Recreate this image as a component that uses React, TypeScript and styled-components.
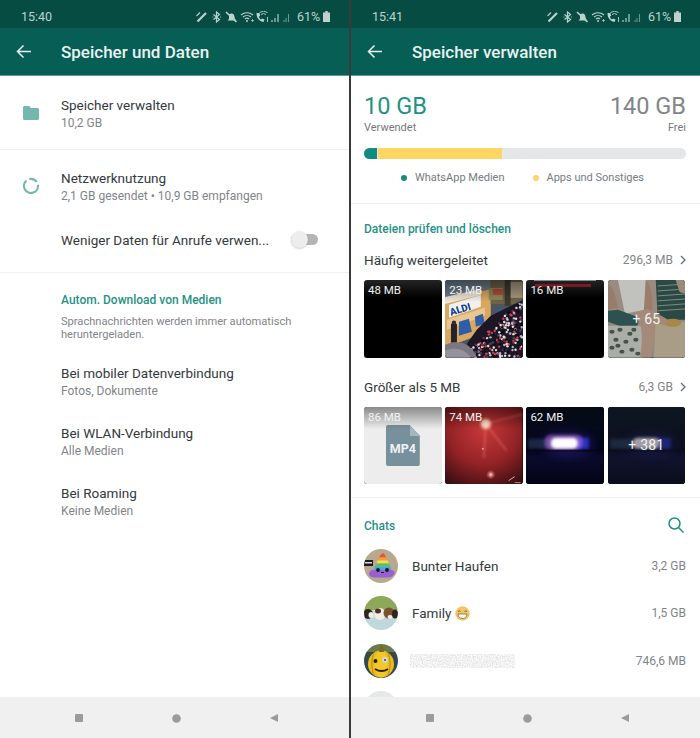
import React from "react";
import styled, { createGlobalStyle } from "styled-components";

const Global = createGlobalStyle`
  html, body { margin: 0; padding: 0; background: #fff; }
  body { font-family: Roboto, "Liberation Sans", sans-serif; width: 700px; height: 738px; overflow: hidden; }
  * { box-sizing: border-box; }
`;

const Page = styled.div`
  display: flex;
  width: 700px;
  height: 738px;
  background: #3a3a3a;
  gap: 2px;
`;
const Phone = styled.div`
  width: 349px;
  height: 738px;
  display: flex;
  flex-direction: column;
  background: #fff;
  overflow: hidden;
`;
const StatusBar = styled.div`
  height: 28px;
  flex: none;
  background: #064c43;
  display: flex;
  align-items: center;
  justify-content: space-between;
  padding: 5px 19px 0 21px;
  color: #bcd3ce;
  font-size: 12.5px;
`;
const StatusIcons = styled.div`
  display: flex;
  align-items: center;
  gap: 5px;
  letter-spacing: -0.05px;
`;
const Toolbar = styled.div`
  height: 48px;
  flex: none;
  background: #075e54;
  display: flex;
  align-items: center;
  border-bottom: 1px solid #5e9a92;
`;
const BackButton = styled.div`
  width: 61px;
  padding-left: 16px;
  display: flex;
  align-items: center;
`;
const ToolbarTitle = styled.div`
  font-size: 17px;
  font-weight: 500;
  color: #e9f3f1;
`;
const Body = styled.div`
  flex: 1;
  min-height: 0;
  overflow: hidden;
`;
const NavBar = styled.div`
  height: 41px;
  flex: none;
  background: #f0f0f0;
  display: flex;
  align-items: center;
  justify-content: space-between;
  padding: 1px 71px 0 75px;
`;
const Divider = styled.div`
  height: 1px;
  background: #efefef;
`;
const SettingRow = styled.div<{ $h: number; $pb?: number }>`
  display: flex;
  height: ${p => p.$h}px;
  padding-bottom: ${p => p.$pb ?? 0}px;
  align-items: center;
`;
const IconSlot = styled.div`
  width: 61px;
  flex: none;
  display: flex;
  justify-content: center;
`;
const RowText = styled.div`
  flex: 1;
  min-width: 0;
  padding-top: 2px;
`;
const Title = styled.div`
  font-size: 13.5px;
  line-height: 18px;
  color: #33393c;
`;
const Sub = styled.div`
  font-size: 12px;
  line-height: 17px;
  margin-top: 1px;
  color: #7f8589;
`;
const SectionHead = styled.div`
  font-size: 12px;
  font-weight: 500;
  line-height: 16px;
  color: #1f9284;
`;
const Switch = styled.div`
  position: relative;
  width: 27px;
  height: 11px;
  border-radius: 6px;
  background: #b4b4b4;
  margin-right: 31px;
`;
const Knob = styled.span`
  position: absolute;
  left: 0;
  top: -3px;
  width: 17px;
  height: 17px;
  border-radius: 50%;
  background: #ededed;
  box-shadow: 0 1px 2px rgba(0,0,0,.18);
`;
const MediaBlock = styled.div`
  padding: 19px 0 0 61px;
  height: 78px;
`;
const Note = styled.div`
  margin-top: 7px;
  font-size: 11.1px;
  line-height: 13px;
  color: #7f8589;
  padding-right: 40px;
`;

const Usage = styled.div`
  padding: 16px 14px 0 13px;
  height: 127px;
`;
const UsageNums = styled.div`
  display: flex;
  justify-content: space-between;
`;
const UsageCol = styled.div<{ $right?: boolean }>`
  display: flex;
  flex-direction: column;
  align-items: ${p => (p.$right ? "flex-end" : "flex-start")};
`;
const Big = styled.div<{ $c: string }>`
  font-size: 23.5px;
  line-height: 28px;
  color: ${p => p.$c};
`;
const Small = styled.div`
  font-size: 11px;
  line-height: 13px;
  margin-top: 1px;
  color: #73797d;
`;
const Bar = styled.div`
  display: flex;
  margin-top: 14px;
  height: 10.5px;
  border-radius: 6px;
  overflow: hidden;
  background: #e4e6e8;
`;
const BarPart = styled.div<{ $c: string; $w: number }>`
  width: ${p => p.$w}px;
  background: ${p => p.$c};
  margin-right: 1px;
`;
const Legend = styled.div`
  display: flex;
  justify-content: center;
  gap: 28px;
  margin-top: 11px;
  padding-right: 5px;
`;
const LegendItem = styled.div`
  display: flex;
  align-items: center;
  gap: 8px;
  font-size: 11px;
  line-height: 16px;
  color: #767c80;
`;
const Dot = styled.span<{ $c: string }>`
  width: 6px;
  height: 6px;
  border-radius: 50%;
  background: ${p => p.$c};
`;
const Files = styled.div`
  padding: 17px 14px 0 13px;
  height: 293px;
`;
const FileRow = styled.div<{ $mt?: number }>`
  display: flex;
  align-items: center;
  justify-content: space-between;
  height: 18px;
  margin: ${p => p.$mt ?? 0}px 0 11px;
`;
const FileTitle = styled.div`
  font-size: 13.5px;
  color: #33393c;
`;
const FileSize = styled.div`
  display: flex;
  align-items: center;
  gap: 7px;
  font-size: 12px;
  color: #7f8589;
`;
const Thumbs = styled.div`
  display: grid;
  grid-template-columns: repeat(4, 77.6px);
  column-gap: 3.6px;
  margin: 0 0 20px;
`;
const Thumb = styled.div<{ $black?: boolean }>`
  position: relative;
  height: 77.6px;
  border-radius: 3px;
  overflow: hidden;
  background: ${p => (p.$black ? "linear-gradient(#242424, #000 18px)" : "#000")};
  svg { display: block; width: 100%; height: 100%; filter: blur(0.35px); }
`;
const Shade = styled.div`
  position: absolute;
  left: 0;
  right: 0;
  top: 0;
  height: 22px;
  background: linear-gradient(rgba(0,0,0,.42), rgba(0,0,0,0));
`;
const ThumbSize = styled.div`
  position: absolute;
  left: 4px;
  top: 3px;
  font-size: 11.5px;
  line-height: 14px;
  color: #f2f2f2;
`;
const Dim = styled.div`
  position: absolute;
  inset: 0;
  display: flex;
  align-items: center;
  justify-content: center;
  background: rgba(40, 50, 50, .22);
  font-size: 14px;
  color: #f2f4f4;
  letter-spacing: 0.2px;
`;
const Banner = styled.div`
  position: absolute;
  left: 8px;
  top: 0;
  width: 62px;
  height: 1px;
  background: #8a8a8a;
`;
const BannerRed = styled.div`
  position: absolute;
  left: 9px;
  top: 4px;
  width: 56px;
  height: 3px;
  background: #7a1a24;
`;
const ChatsHead = styled.div`
  display: flex;
  justify-content: space-between;
  align-items: center;
  height: 20px;
  padding: 0 16px 0 13px;
  margin-top: 18px;
`;
const SearchIcon = styled.svg`
  margin-top: -2px;
`;
const ChatList = styled.div`
  padding: 4px 14px 0 13px;
  margin-top: 2px;
`;
const ChatRow = styled.div`
  display: flex;
  align-items: center;
  height: 47.5px;
`;
const Avatar = styled.div<{ $ghost?: boolean }>`
  width: 34px;
  height: 34px;
  border-radius: 50%;
  overflow: hidden;
  flex: none;
  margin-right: 14px;
  background: ${p => (p.$ghost ? "#e4e8e8" : "transparent")};
  svg { display: block; width: 100%; height: 100%; filter: blur(0.25px); }
`;
const ChatName = styled.div`
  flex: 1;
  display: flex;
  align-items: center;
  gap: 4px;
  font-size: 13.5px;
  color: #33393c;
`;
const ChatSize = styled.div`
  font-size: 12px;
  color: #7f8589;
`;
const BlurredSvg = styled.svg`
  display: block;
  margin-left: -2px;
  filter: blur(0.4px);
`;
const Mp4Card = styled.div`
  position: absolute;
  inset: 0;
  background: #ededed;
  display: flex;
  align-items: center;
  justify-content: center;
`;
const Mp4Icon = styled.div`
  position: relative;
  width: 34px;
  height: 41px;
  background: #78909c;
  border-radius: 2px;
  clip-path: polygon(0 0, 70% 0, 100% 26%, 100% 100%, 0 100%);
  display: flex;
  align-items: center;
  justify-content: center;
  color: #eef2f4;
  font-size: 12.5px;
  font-weight: 700;
  padding-top: 7px;
  &::after {
    content: "";
    position: absolute;
    right: 0;
    top: 0;
    width: 10px;
    height: 11px;
    background: linear-gradient(to top right, #a4b6c0 50%, transparent 50%);
  }
`;

const Back = () => (
  <svg width="15" height="15" viewBox="0 0 15 15" fill="none" stroke="#eaf3f1" strokeWidth="1.5">
    <path d="M15 7.500H1.500M7.500 1.500l-6 6 6 6" />
  </svg>
);
const Chevron = () => (
  <svg width="6" height="10" viewBox="0 0 6 10" fill="none" stroke="#666c70" strokeWidth="1.3">
    <path d="M1 1l4 4-4 4" />
  </svg>
);
const Status = ({ time }: { time: string }) => (
  <StatusBar>
    <span>{time}</span>
    <StatusIcons>
      <svg width="96" height="12" viewBox="0 0 96 12" fill="none" stroke="#bcd3ce" strokeWidth="1.1">
        <path d="M1.500 10.500 10 2" strokeWidth="2.200" />
        <path d="M.5 5 4 1.500" />
        <path d="M17.500 3.500l6 5-3 2.500V1l3 2.500-6 5" strokeWidth="1.200" />
        <path d="M16.500 6h.8M24 6h.8" />
        <path d="M33 3.500c2-1.500 4-1 5 .5l1 4 1.500 1.500h-9L33 8z" fill="#bcd3ce" stroke="none" />
        <path d="M30 1l10.500 10" strokeWidth="1.600" />
        <path d="M45 4a9 9 0 0 1 12 0M47 6a6 6 0 0 1 8 0M49 8a3 3 0 0 1 4 0" />
        <circle cx="51" cy="10" r="1" fill="#bcd3ce" stroke="none" />
        <path d="M55 9.500h3M56.500 8v3" strokeWidth=".7" />
        <path d="M60.500 2c0 5 2.500 8 7 9l1-2.500-2.500-1-1 1c-1.200-.7-1.800-1.700-2-3l1.200-.8-.8-2.700z" fill="#bcd3ce" stroke="none" />
        <path d="M65 3.500a4 4 0 0 1 5 0M63.500 1.500a7 7 0 0 1 8 0" strokeWidth=".9" />
        <path d="M71.500 6v5" strokeWidth=".9" />
        <path d="M76 11V9M79 11V7M82 11V3" />
        <path d="M88 11V9M90 11V7M92.500 11V3" opacity=".55" />
      </svg>
      <span>61%</span>
      <svg width="7" height="11" viewBox="0 0 7 11" fill="#bcd3ce" style={{ marginLeft: -2 }}>
        <path d="M2.300 0h2.400v1.500H7V11H0V1.500h2.300z" />
      </svg>
    </StatusIcons>
  </StatusBar>
);
const Nav = () => (
  <NavBar>
    <svg width="8" height="8" viewBox="0 0 8 8"><rect width="8" height="8" rx="1" fill="#9b9b9b" /></svg>
    <svg width="9" height="9" viewBox="0 0 9 9"><circle cx="4.500" cy="4.500" r="4.300" fill="#9b9b9b" /></svg>
    <svg width="8" height="8" viewBox="0 0 8 8"><path d="M8 0v8L0 4z" fill="#9b9b9b" /></svg>
  </NavBar>
);

function scatter(n: number, seed: number) {
  const pts: { x: number; y: number; c: string }[] = [];
  const cols = ["#c9454c", "#e6dcd8", "#7a2a3c", "#b8b4c4", "#e9e4e0", "#3a4668", "#0c0a14", "#0c0a14"];
  let s = seed;
  const rnd = () => {
    s = (s * 9301 + 49297) % 233280;
    return s / 233280;
  };
  while (pts.length < n) {
    const x = rnd() * 78;
    const y = 18 + rnd() * 60;
    if (y > 74 - (x - 22) * 1.05 && y > 20 + (78 - x) * 0.85) {
      pts.push({ x, y, c: cols[Math.floor(rnd() * cols.length)] });
    }
  }
  return pts;
}
const crowdDots = scatter(230, 7);

const Crowd = () => (
  <svg viewBox="0 0 78 78" preserveAspectRatio="none">
    <rect width="78" height="78" fill="#4e5560" />
    <path d="M0 0h46v9L0 20z" fill="#6b7b8a" />
    <path d="M0 20l46-11v42L0 68z" fill="#d8a860" />
    <path d="M0 17l36-8v6L0 24z" fill="#efe7d8" />
    <path d="M4 25l32-10v12L4 38z" fill="#f2f0ee" />
    <text x="6" y="36" fontFamily="Roboto" fontSize="10" fontWeight="900" fill="#16429c" transform="rotate(-17 6 36)">ALDI</text>
    <path d="M2 40 40 28v8L2 50z" fill="#e8c890" />
    <path d="M14 42l10-3 3 13-13 4z" fill="#2f5ea8" />
    <path d="M30 37l8-3 2 10-9 3z" fill="#2f5ea8" />
    <path d="M46 0h32v24H46z" fill="#6e6248" />
    <path d="M44 8h14v12H44z" fill="#8a8a58" />
    <path d="M48 9h10v6H48z" fill="#b84a3a" />
    <path d="M60 0h6v26h-6z" fill="#3e3a30" />
    <path d="M66 2h12v16H66z" fill="#a89a80" />
    <path d="M52 28h6v10h-6z" fill="#3c5a7a" />
    <path d="M78 20 46 36 32 50 22 64l4 14h52z" fill="#1d1626" />
    <g>{crowdDots.map((d, i) => <circle key={i} cx={d.x} cy={d.y} r="1.200" fill={d.c} />)}</g>
    <rect x="6" y="44" width="6" height="19" fill="#23242a" />
    <circle cx="9" cy="43" r="2.200" fill="#2c2a2c" />
    <path d="M0 78V65c12-5 26-3 32 13z" fill="#7a7882" />
    <path d="M0 71c10-4 20-2 26 7H0z" fill="#96929c" />
  </svg>
);
const sofaSpots = [[4,52],[12,50],[22,54],[8,60],[18,62],[28,60],[4,68],[14,72],[24,70],[30,74],[10,66],[26,50]];
const Sofa = () => (
  <svg viewBox="0 0 78 78" preserveAspectRatio="none">
    <rect width="78" height="78" fill="#a8a59a" />
    <path d="M0 0h52v40H0z" fill="#b9a596" />
    <path d="M10 0h28l-1 30-20 4z" fill="#eceae6" />
    <path d="M0 4c6 4 8 14 10 24L0 30z" fill="#b8917a" />
    <path d="M38 0c6 6 8 20 6 34l-8-3z" fill="#bb927a" />
    <path d="M0 31l10-1 22 8-3 9-12 1L0 42z" fill="#2f5a58" />
    <path d="M0 46h34v32H0z" fill="#cfd1c8" />
    <g fill="#4c5a55">{sofaSpots.map(([x, y], i) => <ellipse key={i} cx={x} cy={y} rx="2.600" ry="2" />)}</g>
    <path d="M26 33l14-4 10 6-3 24-4 19H32c2-12 4-22 0-34z" fill="#c7a58e" />
    <path d="M48 0h30v40H50z" fill="#2e4f48" />
    <path d="M50 6l28-2M50 11l28-2M50 16l28-2M50 21l28-2M50 26l28-2M50 31l28-2" stroke="#8fa89e" strokeWidth="1" />
    <path d="M68 0h10v14l-6-2z" fill="#b9a58e" />
    <path d="M48 42h30v36H46z" fill="#cdbb9f" />
    <ellipse cx="65" cy="43" rx="9" ry="4" fill="#c9a24a" />
    <path d="M48 34c6 2 10 4 14 8l-6 4-8-4z" fill="#c4a088" />
  </svg>
);
const Red = () => (
  <svg viewBox="0 0 78 78" preserveAspectRatio="none">
    <defs>
      <radialGradient id="redBg" cx="0.5" cy="0.3" r="0.8">
        <stop offset="0" stopColor="#c8383a" />
        <stop offset=".55" stopColor="#942326" />
        <stop offset="1" stopColor="#3a0f12" />
      </radialGradient>
      <radialGradient id="redSun"><stop offset="0" stopColor="#fff0e0" /><stop offset=".45" stopColor="#f6c2a8" /><stop offset="1" stopColor="#e0504a" stopOpacity="0" /></radialGradient>
      <radialGradient id="redSpark"><stop offset="0" stopColor="#ffe8dc" /><stop offset="1" stopColor="#e04a48" stopOpacity="0" /></radialGradient>
      <filter id="redBlur" x="-30%" y="-30%" width="160%" height="160%"><feGaussianBlur stdDeviation="1.200" /></filter>
    </defs>
    <rect width="78" height="78" fill="url(#redBg)" />
    <path d="M41 17 62 44M41 17l-2 34M41 17l37-10" stroke="#ee7a70" strokeWidth="2" opacity=".4" filter="url(#redBlur)" fill="none" />
    <circle cx="41" cy="17" r="8" fill="url(#redSun)" />
    <circle cx="38" cy="42" r="1" fill="#f0a090" />
    <circle cx="46" cy="68" r="5" fill="url(#redSpark)" />
    <path d="M64 74l6-4" stroke="#d8b0a8" />
    <path d="M70 76h6" stroke="#a88" />
  </svg>
);
const Concert = ({ id, dim }: { id: string; dim?: boolean }) => (
  <svg viewBox="0 0 78 78" preserveAspectRatio="none">
    <defs>
      <filter id={id} x="-30%" y="-60%" width="160%" height="220%"><feGaussianBlur stdDeviation="1.500" /></filter>
      <filter id={`${id}b`} x="-50%" y="-100%" width="200%" height="300%"><feGaussianBlur stdDeviation="5" /></filter>
      <linearGradient id={`${id}g`} x1="0" y1="0" x2="0" y2="1">
        <stop offset="0" stopColor="#07101e" />
        <stop offset=".55" stopColor="#04041a" />
        <stop offset=".65" stopColor="#0a0a2c" />
        <stop offset="1" stopColor="#030316" />
      </linearGradient>
    </defs>
    <rect width="78" height="78" fill={`url(#${id}g)`} />
    <ellipse cx="42" cy="38" rx="26" ry="12" fill="#3a2cb0" opacity={dim ? 0.2 : 0.35} filter={`url(#${id}b)`} />
    <rect x="2" y="32" width="26" height="10" fill="#3a5a78" opacity=".4" filter={`url(#${id})`} />
    <rect x="50" y="31" width="13" height="11" fill="#2a38d8" opacity={dim ? 0.5 : 0.85} filter={`url(#${id})`} />
    {!dim && <rect x="19" y="28" width="38" height="15" rx="6" fill="#c070e8" opacity=".55" filter={`url(#${id})`} />}
    <rect x="25" y="31" width="27" height="11" rx="5" fill={dim ? "#c4bcc4" : "#fff"} filter={`url(#${id})`} />
    <rect y="43" width="78" height="2" fill="#05051a" opacity=".8" />
  </svg>
);

const Poop = () => (
  <svg viewBox="0 0 34 34">
    <rect width="34" height="34" fill="#b7a98f" />
    <path d="M19 4c1.500 1 2.500 2.500 3 4.500h-7c.5-2 2.500-3 4-4.500z" fill="#e8503f" />
    <path d="M15 8.500h7.500l1.300 3H13.500z" fill="#f49b3a" />
    <path d="M13.500 11.500h10.300l1.200 3H12.500z" fill="#f6e04a" />
    <path d="M12.500 14.500H25l1.300 3H11z" fill="#5cc35a" />
    <path d="M11 17.500h15.300l1 3.500H10z" fill="#3fa9e0" />
    <path d="M9 21h19c3 1 3.500 4 1 5.500-1.500 1.500-3 2-6 2H11c-4 0-6-1.500-6-4 0-2 2-3.500 4-3.500z" fill="#9a5fd0" />
    <circle cx="14" cy="21" r="1.900" fill="#14141e" /><circle cx="23" cy="21" r="1.900" fill="#14141e" />
    <path d="M17 23.500h3" stroke="#14141e" />
    <rect x="0" y="11" width="9" height="6" fill="#1c1c1c" />
    <rect x="1" y="13" width="7" height="1.500" fill="#ddd" />
  </svg>
);
const Guinea = () => (
  <svg viewBox="0 0 34 34">
    <rect width="34" height="15" fill="#8ca95a" />
    <rect y="14" width="34" height="10" fill="#d8d8cc" />
    <rect y="22" width="34" height="12" fill="#c0d8dc" />
    <ellipse cx="4" cy="18" rx="5" ry="5" fill="#2e2420" />
    <ellipse cx="7" cy="19" rx="2.500" ry="3" fill="#f0ebe4" />
    <ellipse cx="16" cy="18" rx="5.500" ry="6" fill="#f2ede6" />
    <ellipse cx="14" cy="15" rx="3" ry="2.500" fill="#4a3026" />
    <ellipse cx="25" cy="17" rx="5.500" ry="5.500" fill="#7a5230" />
    <ellipse cx="31" cy="18" rx="3" ry="4.500" fill="#2f2420" />
    <ellipse cx="26" cy="21" rx="2.500" ry="2" fill="#eee" />
  </svg>
);
const Pumpkin = () => (
  <svg viewBox="0 0 34 34">
    <rect width="34" height="34" fill="#34484e" />
    <rect width="34" height="8" fill="#6a7a4c" />
    <ellipse cx="17" cy="20" rx="13" ry="13.500" fill="#e9bd1e" />
    <ellipse cx="17" cy="20" rx="6.500" ry="13.500" fill="#f0c828" />
    <path d="M10.500 8c-3.500 6-3.500 18 0 24M23.500 8c3.500 6 3.500 18 0 24" stroke="#b88a10" fill="none" />
    <path d="M15 8l1-6h3l1 6z" fill="#7a6a20" />
    <circle cx="11.500" cy="17" r="2" fill="#2a2010" /><circle cx="21" cy="16" r="3" fill="#d8d8cc" /><circle cx="21" cy="16" r="1" fill="#444" />
    <path d="M11 25c4 2.500 9 2.500 13 0" stroke="#2a2010" strokeWidth="1.800" fill="none" />
  </svg>
);
const Grin = () => (
  <svg width="15" height="15" viewBox="0 0 15 15">
    <circle cx="7.500" cy="7.500" r="7.200" fill="#f3c566" />
    <path d="M3 5.500q1.200-1.500 2.400 0M9.600 5.500q1.200-1.500 2.400 0" stroke="#7a5a2a" fill="none" />
    <path d="M3 8h9c0 3-2 4.500-4.500 4.500S3 11 3 8z" fill="#fff" stroke="#7a5a2a" strokeWidth=".7" />
  </svg>
);
const Blurred = () => (
  <BlurredSvg width="105" height="14" viewBox="0 0 105 14">
    <defs>
      <filter id="noise" x="0" y="0" width="100%" height="100%">
        <feTurbulence type="fractalNoise" baseFrequency="0.8" numOctaves="2" seed="4" />
        <feColorMatrix type="matrix" values="0.5 0 0 0 0.63  0.5 0 0 0 0.63  0.5 0 0 0 0.63  0 0 0 0 1" />
      </filter>
    </defs>
    <rect width="105" height="14" filter="url(#noise)" />
  </BlurredSvg>
);

const Left = () => (
  <Phone>
    <Status time="15:40" />
    <Toolbar>
      <BackButton><Back /></BackButton>
      <ToolbarTitle>Speicher und Daten</ToolbarTitle>
    </Toolbar>
    <Body>
      <SettingRow $h={73}>
        <IconSlot>
          <svg width="16" height="14" viewBox="0 0 16 14"><path d="M1.500 0h4.700l1.600 2h6.700c.8 0 1.500.7 1.500 1.500v9c0 .8-.7 1.500-1.500 1.500h-13C.7 14 0 13.300 0 12.500v-11C0 .7.700 0 1.500 0z" fill="#74b7ac" /></svg>
        </IconSlot>
        <RowText>
          <Title>Speicher verwalten</Title>
          <Sub>10,2 GB</Sub>
        </RowText>
      </SettingRow>
      <Divider />
      <SettingRow $h={72}>
        <IconSlot>
          <svg width="18" height="18" viewBox="0 0 18 18" fill="none" stroke="#74b7ac" strokeWidth="2.200">
            <path d="M7.190 2.240A7 7 0 0 1 14.730 4.990M15.890 7.780A7 7 0 1 1 4.500 3.640" />
          </svg>
        </IconSlot>
        <RowText>
          <Title>Netzwerknutzung</Title>
          <Sub>2,1 GB gesendet • 10,9 GB empfangen</Sub>
        </RowText>
      </SettingRow>
      <SettingRow $h={50} $pb={16}>
        <IconSlot />
        <RowText><Title>Weniger Daten für Anrufe verwen...</Title></RowText>
        <Switch><Knob /></Switch>
      </SettingRow>
      <Divider />
      <MediaBlock>
        <SectionHead>Autom. Download von Medien</SectionHead>
        <Note>Sprachnachrichten werden immer automatisch heruntergeladen.</Note>
      </MediaBlock>
      <SettingRow $h={60}>
        <IconSlot />
        <RowText><Title>Bei mobiler Datenverbindung</Title><Sub>Fotos, Dokumente</Sub></RowText>
      </SettingRow>
      <SettingRow $h={60}>
        <IconSlot />
        <RowText><Title>Bei WLAN-Verbindung</Title><Sub>Alle Medien</Sub></RowText>
      </SettingRow>
      <SettingRow $h={60}>
        <IconSlot />
        <RowText><Title>Bei Roaming</Title><Sub>Keine Medien</Sub></RowText>
      </SettingRow>
    </Body>
    <Nav />
  </Phone>
);

const Right = () => (
  <Phone>
    <Status time="15:41" />
    <Toolbar>
      <BackButton><Back /></BackButton>
      <ToolbarTitle>Speicher verwalten</ToolbarTitle>
    </Toolbar>
    <Body>
      <Usage>
        <UsageNums>
          <UsageCol><Big $c="#1f9284">10 GB</Big><Small>Verwendet</Small></UsageCol>
          <UsageCol $right><Big $c="#7f8589">140 GB</Big><Small>Frei</Small></UsageCol>
        </UsageNums>
        <Bar>
          <BarPart $c="#128c7e" $w={12.5} />
          <BarPart $c="#fdd663" $w={124} />
        </Bar>
        <Legend>
          <LegendItem><Dot $c="#128c7e" />WhatsApp Medien</LegendItem>
          <LegendItem><Dot $c="#fdd663" />Apps und Sonstiges</LegendItem>
        </Legend>
      </Usage>
      <Divider />
      <Files>
        <SectionHead>Dateien prüfen und löschen</SectionHead>
        <FileRow $mt={14}>
          <FileTitle>Häufig weitergeleitet</FileTitle>
          <FileSize>296,3 MB <Chevron /></FileSize>
        </FileRow>
        <Thumbs>
          <Thumb $black><ThumbSize>48 MB</ThumbSize></Thumb>
          <Thumb><Crowd /><Shade /><ThumbSize>23 MB</ThumbSize></Thumb>
          <Thumb $black><Banner /><BannerRed /><ThumbSize>16 MB</ThumbSize></Thumb>
          <Thumb><Sofa /><Dim>+ 65</Dim></Thumb>
        </Thumbs>
        <FileRow>
          <FileTitle>Größer als 5 MB</FileTitle>
          <FileSize>6,3 GB <Chevron /></FileSize>
        </FileRow>
        <Thumbs>
          <Thumb><Mp4Card><Mp4Icon>MP4</Mp4Icon></Mp4Card><Shade /><ThumbSize>86 MB</ThumbSize></Thumb>
          <Thumb><Red /><Shade /><ThumbSize>74 MB</ThumbSize></Thumb>
          <Thumb><Concert id="c1" /><Shade /><ThumbSize>62 MB</ThumbSize></Thumb>
          <Thumb><Concert id="c2" dim /><Dim>+ 381</Dim></Thumb>
        </Thumbs>
      </Files>
      <Divider />
      <ChatsHead>
        <SectionHead>Chats</SectionHead>
        <SearchIcon width="16" height="16" viewBox="0 0 16 16" fill="none" stroke="#1f9284" strokeWidth="1.500">
          <circle cx="6.500" cy="6.500" r="5.500" /><path d="M10.500 10.500l5 5" />
        </SearchIcon>
      </ChatsHead>
      <ChatList>
        <ChatRow><Avatar><Poop /></Avatar><ChatName>Bunter Haufen</ChatName><ChatSize>3,2 GB</ChatSize></ChatRow>
        <ChatRow><Avatar><Guinea /></Avatar><ChatName>Family <Grin /></ChatName><ChatSize>1,5 GB</ChatSize></ChatRow>
        <ChatRow><Avatar><Pumpkin /></Avatar><ChatName><Blurred /></ChatName><ChatSize>746,6 MB</ChatSize></ChatRow>
        <ChatRow><Avatar $ghost /></ChatRow>
      </ChatList>
    </Body>
    <Nav />
  </Phone>
);

export default function App() {
  return (
    <>
      <Global />
      <Page>
        <Left />
        <Right />
      </Page>
    </>
  );
}
